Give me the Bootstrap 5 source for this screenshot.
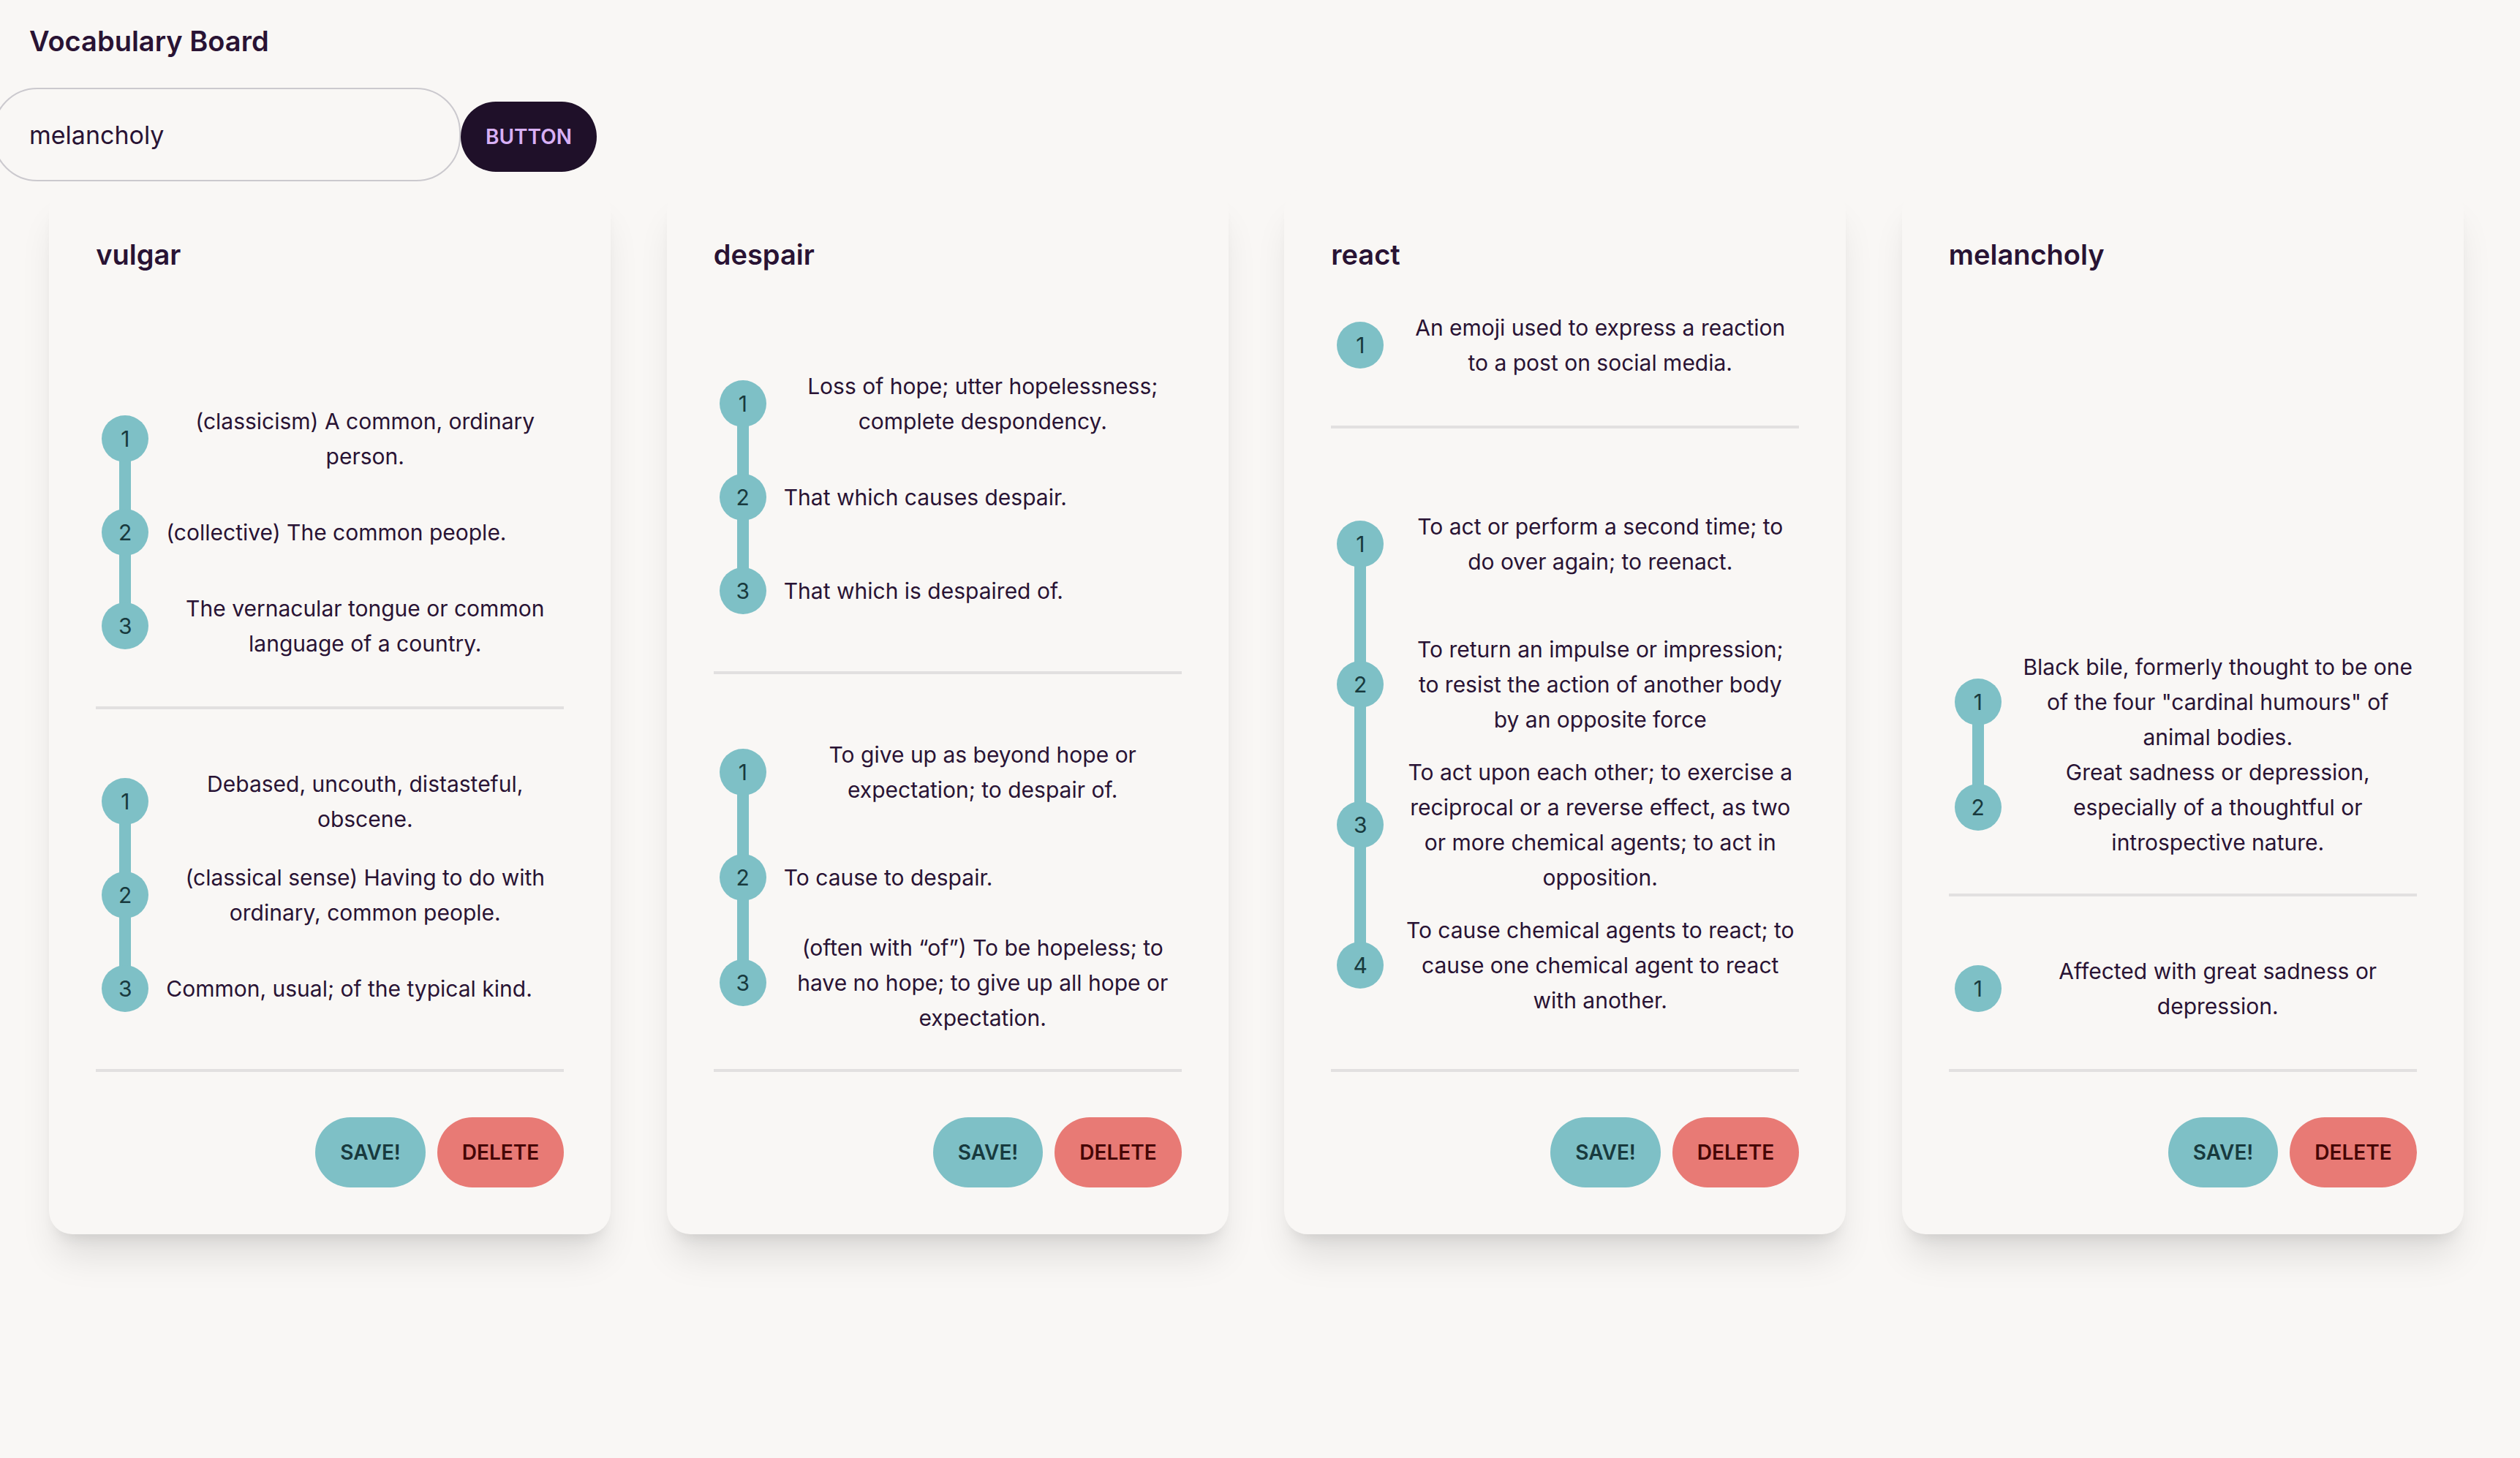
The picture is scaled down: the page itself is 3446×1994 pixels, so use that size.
<!DOCTYPE html>
<html lang="en">
<head>
<meta charset="utf-8">
<meta name="viewport" content="width=device-width, initial-scale=1">
<title>Vocabulary Board</title>
<link href="https://cdn.jsdelivr.net/npm/bootstrap@5.3.0/dist/css/bootstrap.min.css" rel="stylesheet">
<style>
  :root {
    --paper: #f9f7f5;
    --ink: #291334;
    --teal: #7ec0c6;
    --teal-ink: #183a3e;
    --coral: #e87a75;
    --coral-ink: #450605;
    --rule: #e2e0e0;
  }
  body {
    min-height: 100vh;
    background: var(--paper);
    color: var(--ink);
    font-family: Inter, "Liberation Sans", sans-serif;
    font-size: 30px;
    line-height: 48px;
  }
  .board { margin-left: -10px; }
  .board-title { font-size: 38px; font-weight: 600; line-height: 56px; padding: 28px 50px 36px; }
  .board-form { height: 136px; }
  .word-input {
    width: 640px;
    height: 128px;
    padding: 0 48px;
    border: 2px solid #cbc9ce;
    border-radius: 61px;
    background: var(--paper);
    color: var(--ink);
    font-size: 34px;
  }
  .word-input:focus { background: var(--paper); color: var(--ink); }
  .pill {
    height: 96px;
    padding: 0 34px;
    border: 0;
    border-radius: 48px;
    font-size: 28px;
    font-weight: 600;
    line-height: 28px;
    text-transform: uppercase;
  }
  .pill-dark, .pill-dark:hover { background: #1f1029; color: #d8b0f5; }
  .pill-save, .pill-save:hover { background: var(--teal); color: var(--teal-ink); }
  .pill-delete, .pill-delete:hover { background: var(--coral); color: var(--coral-ink); }
  .card-grid { padding: 0 39px 160px; }
  .word-card {
    width: 768px;
    border: 0;
    border-radius: 32px;
    background: var(--paper);
    color: var(--ink);
    box-shadow: 0 40px 50px -10px rgba(0,0,0,.1), 0 16px 20px -12px rgba(0,0,0,.1);
  }
  .word-card .card-body { padding: 64px; gap: 16px; }
  .word-title { font-size: 38px; font-weight: 600; line-height: 56px; margin-bottom: 16px; }
  .sense-list { display: grid; grid-auto-rows: 1fr; }
  .sense {
    display: grid;
    grid-template-columns: 80px 1fr;
    column-gap: 16px;
    align-items: center;
    justify-items: start;
    min-height: 128px;
    position: relative;
  }
  .sense-no {
    display: flex;
    align-items: center;
    justify-content: center;
    justify-self: center;
    width: 64px;
    height: 64px;
    border-radius: 50%;
    background: var(--teal);
    color: var(--teal-ink);
    z-index: 1;
  }
  /* connector running from the previous number to this one */
  .sense + .sense::before {
    content: "";
    position: absolute;
    left: 32px;
    top: -50%;
    width: 16px;
    height: 100%;
    background: var(--teal);
  }
  .rule { height: 4px; margin: 46px 0; background: var(--rule); border: 0; opacity: 1; }
</style>
</head>
<body>
<div class="board">
  <h1 class="board-title m-0">Vocabulary Board</h1>
  <form class="board-form d-flex align-items-baseline" onsubmit="return false">
    <input class="form-control word-input flex-shrink-0" type="text" value="melancholy" aria-label="Word">
    <button class="btn pill pill-dark" type="submit">Button</button>
  </form>

  <main class="card-grid">
    <div class="row row-cols-4 g-0">
      <div class="col d-flex justify-content-center">
        <article class="card word-card">
          <div class="card-body d-flex flex-column">
            <h2 class="word-title mt-0 mb-auto">vulgar</h2>
            <section>
              <ol class="sense-list list-unstyled m-0">
                <li class="sense"><span class="sense-no">1</span><span class="w-100 text-center">(classicism) A common, ordinary<br>person.</span></li>
                <li class="sense"><span class="sense-no">2</span><span>(collective) The common people.</span></li>
                <li class="sense"><span class="sense-no">3</span><span class="w-100 text-center">The vernacular tongue or common<br>language of a country.</span></li>
              </ol>
              <hr class="rule">
            </section>
            <section>
              <ol class="sense-list list-unstyled m-0">
                <li class="sense"><span class="sense-no">1</span><span class="w-100 text-center">Debased, uncouth, distasteful,<br>obscene.</span></li>
                <li class="sense"><span class="sense-no">2</span><span class="w-100 text-center">(classical sense) Having to do with<br>ordinary, common people.</span></li>
                <li class="sense"><span class="sense-no">3</span><span>Common, usual; of the typical kind.</span></li>
              </ol>
              <hr class="rule">
            </section>
            <div class="d-flex justify-content-end gap-3">
              <button class="btn pill pill-save" type="button">Save!</button>
              <button class="btn pill pill-delete" type="button">Delete</button>
            </div>
          </div>
        </article>
      </div>

      <div class="col d-flex justify-content-center">
        <article class="card word-card">
          <div class="card-body d-flex flex-column">
            <h2 class="word-title mt-0 mb-auto">despair</h2>
            <section>
              <ol class="sense-list list-unstyled m-0">
                <li class="sense"><span class="sense-no">1</span><span class="w-100 text-center">Loss of hope; utter hopelessness;<br>complete despondency.</span></li>
                <li class="sense"><span class="sense-no">2</span><span>That which causes despair.</span></li>
                <li class="sense"><span class="sense-no">3</span><span>That which is despaired of.</span></li>
              </ol>
              <hr class="rule">
            </section>
            <section>
              <ol class="sense-list list-unstyled m-0">
                <li class="sense"><span class="sense-no">1</span><span class="w-100 text-center">To give up as beyond hope or<br>expectation; to despair of.</span></li>
                <li class="sense"><span class="sense-no">2</span><span>To cause to despair.</span></li>
                <li class="sense"><span class="sense-no">3</span><span class="w-100 text-center">(often with “of”) To be hopeless; to<br>have no hope; to give up all hope or<br>expectation.</span></li>
              </ol>
              <hr class="rule">
            </section>
            <div class="d-flex justify-content-end gap-3">
              <button class="btn pill pill-save" type="button">Save!</button>
              <button class="btn pill pill-delete" type="button">Delete</button>
            </div>
          </div>
        </article>
      </div>

      <div class="col d-flex justify-content-center">
        <article class="card word-card">
          <div class="card-body d-flex flex-column">
            <h2 class="word-title mt-0">react</h2>
            <section>
              <ol class="sense-list list-unstyled m-0">
                <li class="sense"><span class="sense-no">1</span><span class="w-100 text-center">An emoji used to express a reaction<br>to a post on social media.</span></li>
              </ol>
              <hr class="rule">
            </section>
            <section>
              <ol class="sense-list list-unstyled m-0">
                <li class="sense"><span class="sense-no">1</span><span class="w-100 text-center">To act or perform a second time; to<br>do over again; to reenact.</span></li>
                <li class="sense"><span class="sense-no">2</span><span class="w-100 text-center">To return an impulse or impression;<br>to resist the action of another body<br>by an opposite force</span></li>
                <li class="sense"><span class="sense-no">3</span><span class="w-100 text-center">To act upon each other; to exercise a<br>reciprocal or a reverse effect, as two<br>or more chemical agents; to act in<br>opposition.</span></li>
                <li class="sense"><span class="sense-no">4</span><span class="w-100 text-center">To cause chemical agents to react; to<br>cause one chemical agent to react<br>with another.</span></li>
              </ol>
              <hr class="rule">
            </section>
            <div class="d-flex justify-content-end gap-3">
              <button class="btn pill pill-save" type="button">Save!</button>
              <button class="btn pill pill-delete" type="button">Delete</button>
            </div>
          </div>
        </article>
      </div>

      <div class="col d-flex justify-content-center">
        <article class="card word-card">
          <div class="card-body d-flex flex-column">
            <h2 class="word-title mt-0 mb-auto">melancholy</h2>
            <section>
              <ol class="sense-list list-unstyled m-0">
                <li class="sense"><span class="sense-no">1</span><span class="w-100 text-center">Black bile, formerly thought to be one<br>of the four "cardinal humours" of<br>animal bodies.</span></li>
                <li class="sense"><span class="sense-no">2</span><span class="w-100 text-center">Great sadness or depression,<br>especially of a thoughtful or<br>introspective nature.</span></li>
              </ol>
              <hr class="rule">
            </section>
            <section>
              <ol class="sense-list list-unstyled m-0">
                <li class="sense"><span class="sense-no">1</span><span class="w-100 text-center">Affected with great sadness or<br>depression.</span></li>
              </ol>
              <hr class="rule">
            </section>
            <div class="d-flex justify-content-end gap-3">
              <button class="btn pill pill-save" type="button">Save!</button>
              <button class="btn pill pill-delete" type="button">Delete</button>
            </div>
          </div>
        </article>
      </div>
    </div>
  </main>
</div>
<script src="https://cdn.jsdelivr.net/npm/bootstrap@5.3.0/dist/js/bootstrap.bundle.min.js"></script>
</body>
</html>
